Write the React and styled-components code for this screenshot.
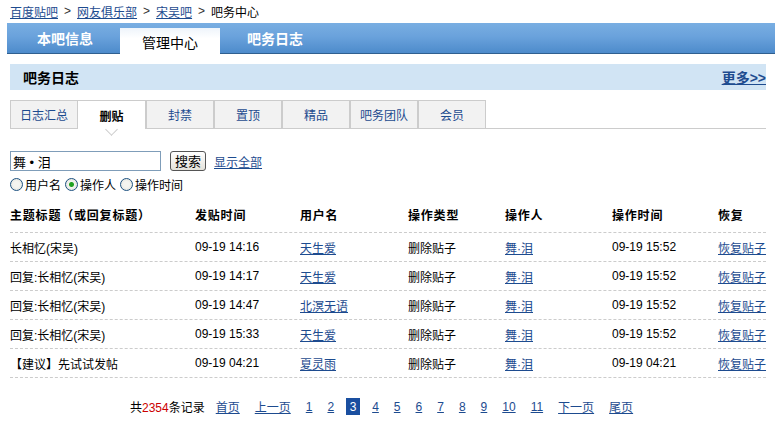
import React from 'react';
import styled, { createGlobalStyle } from 'styled-components';

const GlobalStyle = createGlobalStyle`
  body {
    margin: 0;
    background: #ffffff;
    font-family: "Liberation Sans", "Noto Sans CJK SC", sans-serif;
    font-size: 12px;
    color: #000000;
  }
`;

const rows = [
  { title: '长相忆(宋吴)', post: '09-19 14:16', user: '天生爱', op: '09-19 15:52' },
  { title: '回复:长相忆(宋吴)', post: '09-19 14:17', user: '天生爱', op: '09-19 15:52' },
  { title: '回复:长相忆(宋吴)', post: '09-19 14:47', user: '北溟无语', op: '09-19 15:52' },
  { title: '回复:长相忆(宋吴)', post: '09-19 15:33', user: '天生爱', op: '09-19 15:52' },
  { title: '【建议】先试试发帖', post: '09-19 04:21', user: '夏灵雨', op: '09-19 04:21' },
];

const subTabs = ['日志汇总', '删贴', '封禁', '置顶', '精品', '吧务团队', '会员'];
const pages = ['1', '2', '3', '4', '5', '6', '7', '8', '9', '10', '11'];

const App = () => {
  return (
    <Page>
      <GlobalStyle />
      <Crumbs>
        <Link href="#">百度贴吧</Link>
        <Sep>&gt;</Sep>
        <Link href="#">网友俱乐部</Link>
        <Sep>&gt;</Sep>
        <Link href="#">宋吴吧</Link>
        <Sep>&gt;</Sep>
        <span>吧务中心</span>
      </Crumbs>

      <MainBar>
        <MainTab>本吧信息</MainTab>
        <MainTab $active>管理中心</MainTab>
        <MainTab>吧务日志</MainTab>
      </MainBar>

      <Content>
        <SectionHead>
          <SectionTitle>吧务日志</SectionTitle>
          <MoreLink href="#">更多&gt;&gt;</MoreLink>
        </SectionHead>

        <SubBar>
          {subTabs.map((t, i) => (
            <SubTab key={t} $active={i === 1}>{t}</SubTab>
          ))}
        </SubBar>

        <SearchRow>
          <SearchInput defaultValue="舞 • 泪" />
          <SearchButton>搜索</SearchButton>
          <Link href="#">显示全部</Link>
        </SearchRow>
        <RadioRow>
          <RadioLabel><Radio /> 用户名</RadioLabel>
          <RadioLabel><Radio $checked /> 操作人</RadioLabel>
          <RadioLabel><Radio /> 操作时间</RadioLabel>
        </RadioRow>

        <Table>
          <HeadRow>
            <div>主题标题（或回复标题）</div>
            <div>发贴时间</div>
            <div>用户名</div>
            <div>操作类型</div>
            <div>操作人</div>
            <div>操作时间</div>
            <div>恢复</div>
          </HeadRow>
          {rows.map((r, i) => (
            <Row key={i}>
              <div>{r.title}</div>
              <div>{r.post}</div>
              <div><Link href="#">{r.user}</Link></div>
              <div>删除贴子</div>
              <div><Link href="#">舞·泪</Link></div>
              <div>{r.op}</div>
              <div><Link href="#">恢复贴子</Link></div>
            </Row>
          ))}
        </Table>

        <Pager>
          <span>共<Count>2354</Count>条记录</span>
          <PageLink href="#" $shift={-4}>首页</PageLink>
          <PageLink href="#">上一页</PageLink>
          {pages.map((p) => (
            p === '3'
              ? <Current key={p}>{p}</Current>
              : <PageLink key={p} href="#">{p}</PageLink>
          ))}
          <PageLink href="#">下一页</PageLink>
          <PageLink href="#">尾页</PageLink>
        </Pager>
      </Content>
    </Page>
  );
};

const Page = styled.div`
  width: 775px;
  height: 426px;
  overflow: hidden;
`;

const Link = styled.a`
  color: #1d4b8f;
  text-decoration: underline;
`;

const Crumbs = styled.div`
  display: flex;
  align-items: center;
  height: 22px;
  padding-left: 10px;
  font-size: 12px;
`;

const Sep = styled.span`
  margin: 0 6px;
  color: #333;
`;

const MainBar = styled.div`
  display: flex;
  align-items: flex-end;
  height: 30px;
  margin: 1px 0 0 7px;
  padding-left: 8px;
  background: linear-gradient(to bottom, #79aee2 0%, #6aa2dc 45%, #4d8bcb 100%);
  border-bottom: 1px solid #2f5f8f;
`;

const MainTab = styled.div`
  display: flex;
  align-items: center;
  justify-content: center;
  width: 100px;
  height: ${(p) => (p.$active ? '26px' : '30px')};
  margin-bottom: ${(p) => (p.$active ? '-1px' : '0')};
  background: ${(p) => (p.$active ? 'linear-gradient(to bottom, #eef4fb, #ffffff 40%)' : 'transparent')};
  color: ${(p) => (p.$active ? '#000' : '#fff')};
  font-weight: ${(p) => (p.$active ? 'normal' : 'bold')};
  font-size: 14px;
  padding-top: ${(p) => (p.$active ? '2px' : '0')};
  box-sizing: border-box;
  margin-right: 5px;
`;

const Content = styled.div`
  padding: 10px 9px 0 10px;
`;

const SectionHead = styled.div`
  display: flex;
  align-items: center;
  justify-content: space-between;
  height: 26px;
  padding-left: 13px;
  background: #d1e4f4;
`;

const SectionTitle = styled.div`
  font-size: 14px;
  font-weight: bold;
`;

const MoreLink = styled(Link)`
  font-size: 14px;
  font-weight: bold;
`;

const SubBar = styled.div`
  display: flex;
  margin-top: 10px;
  border-bottom: 1px solid #cccccc;
`;

const SubTab = styled.div`
  position: relative;
  display: flex;
  align-items: center;
  justify-content: center;
  box-sizing: border-box;
  width: ${(p) => (p.$active ? '69px' : '68px')};
  height: ${(p) => (p.$active ? '29px' : '28px')};
  margin-left: ${(p) => (p.$active ? '-1px' : '0')};
  border: 1px solid #cccccc;
  border-bottom: none;
  margin-bottom: ${(p) => (p.$active ? '-1px' : '0')};
  background: ${(p) => (p.$active ? '#ffffff' : '#f2f2f2')};
  color: ${(p) => (p.$active ? '#000' : '#1d4b8f')};
  font-weight: ${(p) => (p.$active ? 'bold' : 'normal')};
  font-size: 12px;
  &:not(:first-child) {
    border-left: ${(p) => (p.$active ? '1px solid #cccccc' : 'none')};
  }
  & + & {
    border-left: ${(p) => (p.$active ? '1px solid #cccccc' : 'none')};
  }
  &::after {
    content: '';
    display: ${(p) => (p.$active ? 'block' : 'none')};
    position: absolute;
    left: 50%;
    bottom: -5px;
    width: 8px;
    height: 8px;
    margin-left: -5px;
    background: #fff;
    border-right: 1px solid #cccccc;
    border-bottom: 1px solid #cccccc;
    transform: rotate(45deg);
  }
`;

const SearchRow = styled.div`
  display: flex;
  align-items: center;
  gap: 8px;
  margin-top: 22px;
`;

const SearchInput = styled.input`
  width: 151px;
  height: 20px;
  box-sizing: border-box;
  border: 1px solid #7f9db9;
  padding: 0 2px;
  font-family: "Liberation Sans", "Noto Sans CJK SC", sans-serif;
  font-size: 13px;
  margin-right: 1px;
`;

const SearchButton = styled.button`
  height: 20px;
  padding: 0 4px;
  font-family: "Noto Sans CJK SC", sans-serif;
  font-size: 13px;
  border: 1px solid #555;
  border-radius: 3px;
  background: linear-gradient(to bottom, #ffffff, #e4e2da);
  line-height: 16px;
`;

const RadioRow = styled.div`
  display: flex;
  align-items: center;
  gap: 4px;
  margin-top: 4px;
  height: 18px;
`;

const RadioLabel = styled.span`
  display: flex;
  align-items: center;
  gap: 2px;
  font-size: 12px;
`;

const Radio = styled.span`
  width: 11px;
  height: 11px;
  border: 1px solid #1c5180;
  border-radius: 50%;
  background: radial-gradient(circle, ${(p) => (p.$checked ? '#21a121 0 2px,' : '')} #f4f4f0 3px, #dcdcd6 100%);
`;

const Table = styled.div`
  margin-top: 4px;
`;

const cols = '185px 105px 108px 97px 107px 106px 1fr';

const HeadRow = styled.div`
  display: grid;
  grid-template-columns: ${cols};
  height: 35px;
  align-items: center;
  font-weight: bold;
  font-size: 12px;
  letter-spacing: 0.8px;
  border-bottom: 1px dashed #cccccc;
`;

const Row = styled.div`
  display: grid;
  grid-template-columns: ${cols};
  height: 28px;
  align-items: center;
  font-size: 12px;
  border-bottom: 1px dashed #cccccc;
  white-space: nowrap;
`;

const Pager = styled.div`
  display: flex;
  align-items: center;
  gap: 15px;
  margin-top: 20px;
  padding-left: 120px;
  font-size: 12px;
`;

const Count = styled.span`
  color: #cc0000;
`;

const PageLink = styled(Link)`
  margin-left: ${(p) => p.$shift || 0}px;
`;

const Current = styled.span`
  display: inline-flex;
  align-items: center;
  justify-content: center;
  width: 14px;
  height: 17px;
  margin: 0 -3px;
  background: #1a4fa0;
  color: #ffffff;
`;

export default App;
